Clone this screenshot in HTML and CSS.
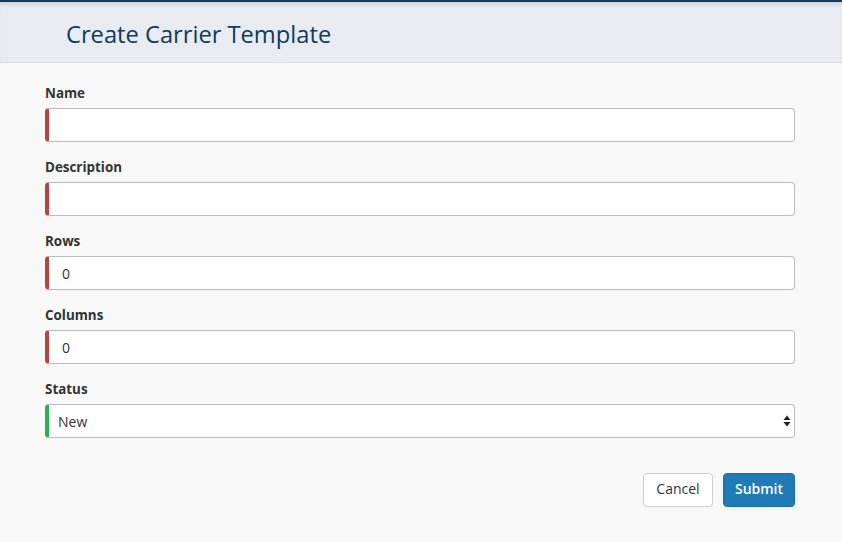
FILE: index.html
```html
<!DOCTYPE html>
<html>
<head>
<meta charset="utf-8">
<link rel="stylesheet" href="styles.css">
</head>
<body>
<header class="page-header">
  <h1 class="page-title">Create Carrier Template</h1>
</header>
<form class="form">
  <div class="field">
    <label class="label">Name</label>
    <input class="input invalid" type="text" value="">
  </div>
  <div class="field">
    <label class="label">Description</label>
    <input class="input invalid" type="text" value="">
  </div>
  <div class="field">
    <label class="label">Rows</label>
    <input class="input invalid" type="text" value="0">
  </div>
  <div class="field">
    <label class="label">Columns</label>
    <input class="input invalid" type="text" value="0">
  </div>
  <div class="field">
    <label class="label">Status</label>
    <div class="select-wrap">
      <select class="input select valid"><option>New</option></select>
      <svg class="select-arrows" width="8" height="12" viewBox="0 0 8 12"><path d="M4 0.5 L7.5 5 H0.5 Z M4 11.5 L7.5 7 H0.5 Z" fill="#222"/></svg>
    </div>
  </div>
  <div class="actions">
    <button type="button" class="btn btn-default">Cancel</button>
    <button type="button" class="btn btn-primary">Submit</button>
  </div>
</form>
</body>
</html>
```
FILE: styles.css
```css
html, body {
  margin: 0;
  padding: 0;
}
body {
  background: #f8f8f8;
  font-family: "Open Sans", "Liberation Sans", sans-serif;
  color: #333;
  width: 842px;
  height: 542px;
  overflow: hidden;
}
.page-header {
  background: #e8ebef;
  border-top: 2px solid #0d3b62;
  border-bottom: 1px solid #d7dce2;
  box-shadow: inset 0 5px 5px -3px rgba(0,0,0,0.12);
  height: 60px;
  box-sizing: content-box;
  display: flex;
  align-items: center;
  padding-left: 66px;
}
.page-title {
  margin: 0;
  font-size: 23.7px;
  font-weight: 400;
  color: #0f3b5c;
  position: relative;
  top: 2px;
}
.form {
  padding: 21px 47px 0 45px;
  display: flex;
  flex-direction: column;
  gap: 16px;
}
.field {
  display: flex;
  flex-direction: column;
  gap: 6px;
}
.label {
  font-size: 13.4px;
  line-height: 18px;
  font-weight: 700;
  color: #333;
}
.input {
  box-sizing: border-box;
  height: 34px;
  width: 100%;
  margin: 0;
  background: #fff;
  border: 1px solid #bcbcbc;
  border-radius: 4px;
  font-family: "Open Sans", "Liberation Sans", sans-serif;
  font-size: 14px;
  color: #333;
  padding: 0 13px;
  outline: none;
}
.invalid {
  border-left: 4px solid #b74443;
}
.valid {
  border-left: 4px solid #2fad5b;
}
.select-wrap {
  position: relative;
}
.select {
  appearance: none;
  -webkit-appearance: none;
  padding-left: 9px;
}
.select-arrows {
  position: absolute;
  right: 4px;
  top: 11px;
  pointer-events: none;
}
.actions {
  display: flex;
  justify-content: flex-end;
  gap: 10px;
  margin-top: 19px;
}
.btn {
  height: 34px;
  box-sizing: border-box;
  border-radius: 4px;
  font-family: "Open Sans", "Liberation Sans", sans-serif;
  font-size: 14px;
  line-height: 30px;
  padding: 0 0 2px;
  cursor: pointer;
}
.btn-default {
  background: #fff;
  border: 1px solid #cfcfcf;
  color: #333;
  width: 70px;
}
.btn-primary {
  background: #1f7bb5;
  border: 1px solid #1b6fa5;
  color: #fff;
  font-weight: 600;
  width: 72px;
}
```
